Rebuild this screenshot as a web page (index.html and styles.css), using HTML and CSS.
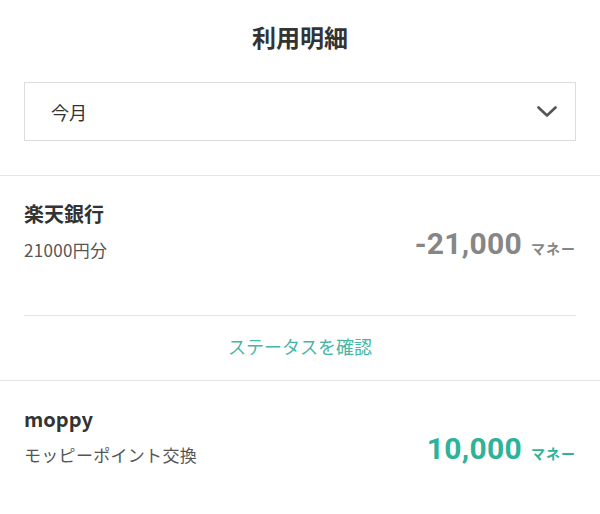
FILE: index.html
```html
<!DOCTYPE html>
<html lang="ja">
<head>
<meta charset="utf-8">
<title>利用明細</title>
<link rel="stylesheet" href="styles.css">
</head>
<body>
<header class="header">
  <h1 class="title">利用明細</h1>
  <div class="select">
    <span class="select-label">今月</span>
    <svg class="chevron" width="20" height="12" viewBox="0 0 20 12"><polyline points="1.5,1.5 10,9.5 18.5,1.5" fill="none" stroke="#555" stroke-width="2.6" stroke-linecap="round" stroke-linejoin="round"/></svg>
  </div>
</header>

<section class="item">
  <div class="row">
    <div class="info">
      <div class="name">楽天銀行</div>
      <div class="sub">21000円分</div>
    </div>
    <div class="amount amount-minus"><span class="num">-21,000</span><span class="unit">マネー</span></div>
  </div>
  <div class="status"><span class="status-link">ステータスを確認</span></div>
</section>

<section class="item item-last">
  <div class="row">
    <div class="info">
      <div class="name name-latin">moppy</div>
      <div class="sub">モッピーポイント交換</div>
    </div>
    <div class="amount amount-plus"><span class="num">10,000</span><span class="unit">マネー</span></div>
  </div>
</section>
</body>
</html>
```

FILE: styles.css
```css
html, body {
  margin: 0;
  padding: 0;
  background: #fff;
}
body {
  font-family: "Noto Sans CJK JP", "Noto Sans", sans-serif;
  color: #333;
}
.header {
  padding: 20px 24px 34px;
  border-bottom: 1px solid #e6e6e6;
}
.title {
  margin: 0;
  font-size: 24px;
  line-height: 34px;
  font-weight: 700;
  text-align: center;
  color: #333;
}
.select {
  margin-top: 28px;
  height: 57px;
  border: 1px solid #dcdcdc;
  display: flex;
  align-items: center;
  justify-content: space-between;
  padding: 0 18px 0 26px;
}
.select-label {
  font-size: 18px;
  color: #333;
}
.chevron {
  display: block;
}
.item {
  border-bottom: 1px solid #e6e6e6;
}
.item-last {
  border-bottom: none;
}
.row {
  margin: 0 24px;
  padding: 24px 0 52px;
  display: flex;
  justify-content: space-between;
  align-items: flex-start;
}
.item .row {
  border-bottom: 1px solid #e6e6e6;
}
.item-last .row {
  border-bottom: none;
}
.name {
  font-size: 20px;
  line-height: 28px;
  font-weight: 700;
  color: #333;
}
.sub {
  margin-top: 9px;
  font-size: 17px;
  line-height: 26px;
  color: #555;
  letter-spacing: 0.3px;
}
.amount {
  margin-top: 27px;
  display: flex;
  align-items: baseline;
  font-weight: 700;
}
.num {
  font-family: "Roboto", "Liberation Sans", sans-serif;
  font-size: 30px;
  line-height: 34px;
  letter-spacing: 0.3px;
}
.unit {
  margin-left: 9px;
  font-size: 14px;
  letter-spacing: 1px;
}
.amount-minus {
  color: #868686;
}
.amount-plus {
  color: #2fb398;
}
.status {
  height: 64px;
  padding-bottom: 4px;
  box-sizing: border-box;
  display: flex;
  align-items: center;
  justify-content: center;
}
.status-link {
  font-size: 18px;
  color: #45b6a3;
}
```
